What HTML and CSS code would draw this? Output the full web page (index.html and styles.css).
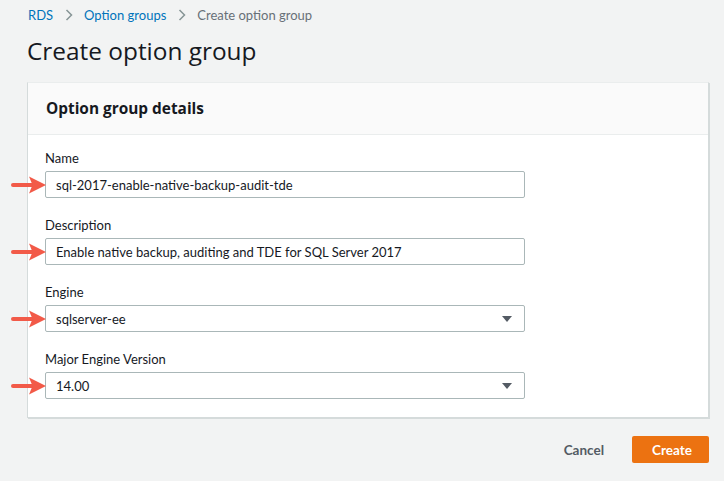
FILE: index.html
```html
<!DOCTYPE html>
<html>
<head>
<meta charset="utf-8">
<link rel="stylesheet" href="styles.css">
</head>
<body>
<div class="page">
  <nav class="crumbs">
    <a class="crumb-link">RDS</a>
    <svg class="chev" width="8" height="12" viewBox="0 0 8 12"><path d="M1.5 1 L6.5 6 L1.5 11" fill="none" stroke="#879596" stroke-width="1.5"/></svg>
    <a class="crumb-link">Option groups</a>
    <svg class="chev" width="8" height="12" viewBox="0 0 8 12"><path d="M1.5 1 L6.5 6 L1.5 11" fill="none" stroke="#879596" stroke-width="1.5"/></svg>
    <span class="crumb-current">Create option group</span>
  </nav>
  <h1 class="title">Create option group</h1>
  <section class="panel">
    <div class="panel-head">Option group details</div>
    <div class="panel-body">
      <div class="field">
        <label class="label">Name</label>
        <div class="input">sql-2017-enable-native-backup-audit-tde</div>
        <svg class="arrow" width="36" height="18" viewBox="0 0 36 18"><path d="M2 9 H22" stroke="#f25a48" stroke-width="4" stroke-linecap="round"/><path d="M18 0.5 L35 9 L18 17.5 L21.5 9 Z" fill="#f25a48"/></svg>
      </div>
      <div class="field">
        <label class="label">Description</label>
        <div class="input">Enable native backup, auditing and TDE for SQL Server 2017</div>
        <svg class="arrow" width="36" height="18" viewBox="0 0 36 18"><path d="M2 9 H22" stroke="#f25a48" stroke-width="4" stroke-linecap="round"/><path d="M18 0.5 L35 9 L18 17.5 L21.5 9 Z" fill="#f25a48"/></svg>
      </div>
      <div class="field">
        <label class="label">Engine</label>
        <div class="input select"><span>sqlserver-ee</span><span class="caret"></span></div>
        <svg class="arrow" width="36" height="18" viewBox="0 0 36 18"><path d="M2 9 H22" stroke="#f25a48" stroke-width="4" stroke-linecap="round"/><path d="M18 0.5 L35 9 L18 17.5 L21.5 9 Z" fill="#f25a48"/></svg>
      </div>
      <div class="field last">
        <label class="label">Major Engine Version</label>
        <div class="input select"><span>14.00</span><span class="caret"></span></div>
        <svg class="arrow" width="36" height="18" viewBox="0 0 36 18"><path d="M2 9 H22" stroke="#f25a48" stroke-width="4" stroke-linecap="round"/><path d="M18 0.5 L35 9 L18 17.5 L21.5 9 Z" fill="#f25a48"/></svg>
      </div>
    </div>
  </section>
  <div class="actions">
    <button class="btn-link">Cancel</button>
    <button class="btn-primary">Create</button>
  </div>
</div>
</body>
</html>
```
FILE: styles.css
```css
* { box-sizing: border-box; }
html, body { margin: 0; padding: 0; }
body {
  background: #f2f3f3;
  font-family: Lato, "Open Sans", Arial, sans-serif;
  color: #16191f;
  width: 724px;
  height: 481px;
  overflow: hidden;
}
.page { padding: 6px 15px 0 27px; }
.crumbs {
  display: flex;
  align-items: center;
  gap: 11.5px;
  font-size: 13px;
  line-height: 18px;
  padding-left: 1px;
}
.crumb-link { color: #0073bb; }
.crumb-current { color: #687078; }
.chev { display: block; }
.title {
  margin: 10px 0 0 0;
  font-family: "Open Sans", Lato, sans-serif;
  font-size: 24.4px;
  line-height: 34px;
  font-weight: 400;
  color: #16191f;
}
.panel {
  margin-top: 14px;
  width: 682px;
  background: #fff;
  border: 1px solid #d5dbdb;
  border-top-color: #eaeded;
  box-shadow: 1px 1px 0 #d5dbdb;
}
.panel-head {
  height: 52px;
  display: flex;
  align-items: center;
  padding-left: 18px;
  background: #fafafa;
  border-bottom: 1px solid #eaeded;
  font-family: "Open Sans", Lato, sans-serif;
  font-size: 15.4px;
  font-weight: 700;
}
.panel-body { padding: 13px 18px 18px 17px; }
.field { position: relative; margin-bottom: 17px; }
.field.last { margin-bottom: 0; }
.label {
  display: block;
  font-size: 13px;
  line-height: 20px;
  margin-bottom: 3px;
  color: #16191f;
}
.input {
  width: 480px;
  height: 27px;
  border: 1px solid #aab7b8;
  border-radius: 2px;
  padding: 0 10px;
  display: flex;
  align-items: center;
  font-size: 13px;
  color: #16191f;
  background: #fff;
}
.select { justify-content: space-between; padding-right: 12px; }
.caret {
  width: 0; height: 0;
  border-left: 5px solid transparent;
  border-right: 5px solid transparent;
  border-top: 6px solid #545b64;
}
.arrow {
  position: absolute;
  left: -34px;
  bottom: 4px;
}
.actions {
  display: flex;
  justify-content: flex-end;
  align-items: center;
  gap: 8px;
  width: 682px;
  margin-top: 18px;
}
.btn-link, .btn-primary {
  font-family: inherit;
  font-size: 13.5px;
  font-weight: 700;
  border: none;
  height: 27px;
  padding: 0 20px;
  border-radius: 2px;
}
.btn-link { background: transparent; color: #545b64; }
.btn-primary { background: #ec7211; color: #fff; width: 77px; }
```
